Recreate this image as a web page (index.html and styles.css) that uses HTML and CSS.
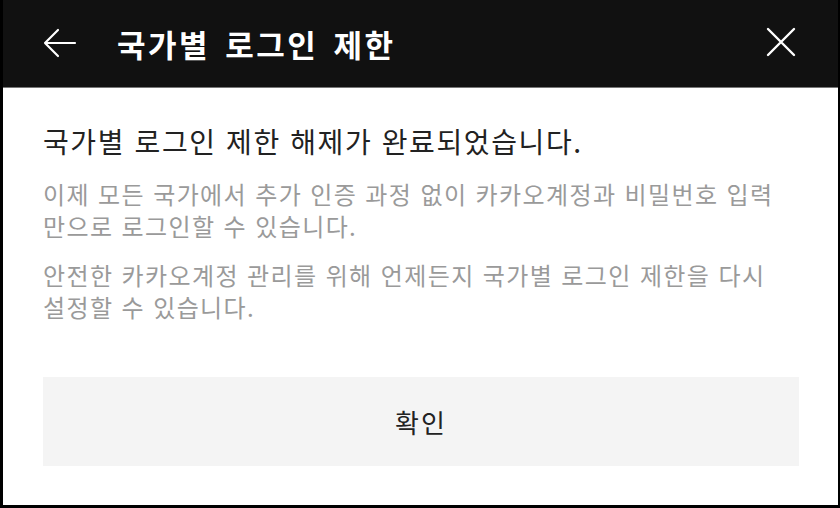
FILE: index.html
```html
<!DOCTYPE html>
<html lang="ko">
<head>
    <meta charset="UTF-8">
    <meta name="viewport" content="width=device-width, initial-scale=1.0">
    <title>국가별 로그인 제한</title>
    <link rel="stylesheet" href="styles.css">
</head>
<body>
    <div class="screen">
        <header class="topbar">
            <button class="icon-btn back" aria-label="뒤로">
                <svg width="34" height="30" viewBox="0 0 34 30" fill="none" stroke="#fff" stroke-width="2.2" stroke-linecap="round" stroke-linejoin="round">
                    <path d="M32 15H2M15 2L2 15l13 13"/>
                </svg>
            </button>
            <h1 class="title">국가별 로그인 제한</h1>
            <button class="icon-btn close" aria-label="닫기">
                <svg width="32" height="32" viewBox="0 0 32 32" fill="none" stroke="#fff" stroke-width="2.4" stroke-linecap="round">
                    <path d="M3 3l26 26M29 3L3 29"/>
                </svg>
            </button>
        </header>

        <main class="content">
            <h2 class="headline">국가별 로그인 제한 해제가 완료되었습니다.</h2>
            <p class="desc">이제 모든 국가에서 추가 인증 과정 없이 카카오계정과 비밀번호 입력 만으로 로그인할 수 있습니다.</p>
            <p class="desc">안전한 카카오계정 관리를 위해 언제든지 국가별 로그인 제한을 다시 설정할 수 있습니다.</p>
            <button class="confirm">확인</button>
        </main>
    </div>
</body>
</html>
```

FILE: styles.css
```css
* {
    margin: 0;
    padding: 0;
    box-sizing: border-box;
    font-family: "Noto Sans CJK KR", "Noto Sans", sans-serif;
}

body {
    background: #000;
}

.screen {
    width: 840px;
    height: 508px;
    background: #fff;
    border-left: 3px solid #000;
    border-right: 2px solid #000;
    border-bottom: 3px solid #000;
    display: flex;
    flex-direction: column;
    overflow: hidden;
}

.topbar {
    height: 88px;
    background: #111;
    border-bottom: 1px solid #777;
    display: flex;
    align-items: center;
    padding: 0 40px;
}

.icon-btn {
    background: transparent;
    border: none;
    display: flex;
    align-items: center;
    justify-content: center;
    cursor: pointer;
}

.back {
    margin-top: -2px;
}

.title {
    color: #fff;
    font-size: 31px;
    font-weight: bold;
    letter-spacing: 2.5px;
    word-spacing: 4px;
    margin-left: 40px;
    flex: 1;
}

.close {
    margin-top: -4px;
    margin-right: 1px;
}

.content {
    padding: 33px 39px 0 40px;
    display: flex;
    flex-direction: column;
    word-break: keep-all;
}

.headline {
    font-size: 28px;
    font-weight: normal;
    line-height: 40px;
    letter-spacing: 1.6px;
    color: #222;
    margin-bottom: 17px;
}

.desc {
    font-size: 24px;
    line-height: 32px;
    letter-spacing: 1.4px;
    color: #9a9a9a;
    margin-bottom: 17px;
}

.confirm {
    margin-top: 37px;
    height: 89px;
    background: #f4f4f4;
    border: none;
    font-size: 26px;
    letter-spacing: 2px;
    color: #222;
    cursor: pointer;
}
```
